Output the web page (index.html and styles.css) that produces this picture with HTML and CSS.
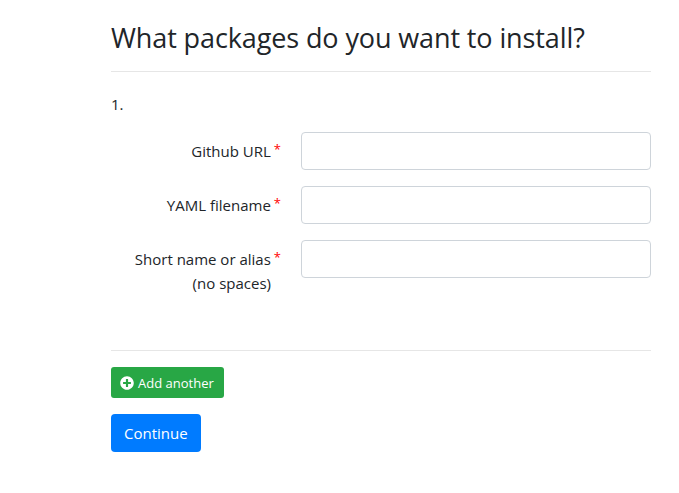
FILE: index.html

```html
<!DOCTYPE html>
<html lang="en">
<head>
  <meta charset="UTF-8" />
  <title>Packages</title>
  <link rel="stylesheet" href="styles.css">
</head>
<body>

<div class="contenedor">
  <h1>What packages do you want to install?</h1>
  <hr />

  <div class="paquete">
    <div class="numero">1.</div>

    <div class="fila">
      <label class="etiqueta">Github URL<span class="req">*</span></label>
      <input type="text" class="campo" />
    </div>
    <div class="fila">
      <label class="etiqueta">YAML filename<span class="req">*</span></label>
      <input type="text" class="campo" />
    </div>
    <div class="fila">
      <label class="etiqueta">Short name or alias<span class="req">*</span><br />(no spaces)</label>
      <input type="text" class="campo" />
    </div>
  </div>

  <hr />

  <button class="boton-add">
    <svg class="icono" viewBox="0 0 512 512" width="14" height="14"><path fill="currentColor" d="M256 8C119 8 8 119 8 256s111 248 248 248 248-111 248-248S393 8 256 8zm144 276c0 6.600-5.400 12-12 12h-92v92c0 6.600-5.400 12-12 12h-56c-6.600 0-12-5.400-12-12v-92h-92c-6.600 0-12-5.400-12-12v-56c0-6.600 5.400-12 12-12h92v-92c0-6.600 5.400-12 12-12h56c6.600 0 12 5.400 12 12v92h92c6.600 0 12 5.400 12 12v56z"/></svg>
    Add another
  </button>
  <button class="boton-continuar">Continue</button>
</div>

</body>
</html>
```

FILE: styles.css

```css
* { box-sizing: border-box; }
body { font-family: "Open Sans", "Noto Sans", sans-serif; font-size: 15px; color: #212529; margin: 0; background: #fff; }
.contenedor { width: 540px; margin-left: 111px; padding-top: 19px; }
h1 { font-size: 27px; font-weight: 400; line-height: 38px; margin: 0 0 14px; letter-spacing: -0.11px; }
hr { border: 0; border-top: 1px solid #e6e6e6; margin: 0; }
.paquete { padding-top: 22px; height: 278px; }
.numero { line-height: 21px; margin-bottom: 17px; }
.fila { display: flex; gap: 20px; margin-bottom: 16px; }
.etiqueta { width: 170px; text-align: right; line-height: 24px; padding: 7px 10px 0 0; }
.req { color: #f00; font-size: 13px; line-height: 0; margin: 0 -10px 0 3px; position: relative; top: -3px; }
.campo { flex: 1; height: 38px; border: 1px solid #ced4da; border-radius: 4px; background: #fff; }
.boton-add { display: flex; align-items: center; gap: 4px; height: 31px; margin-top: 16px; padding: 0 9px; width: 113px; background: #28a745; color: #fff; border: 0; border-radius: 3px; font: inherit; font-size: 13px; }
.boton-continuar { display: block; height: 38px; margin-top: 16px; padding: 0 13px; background: #007bff; color: #fff; border: 0; border-radius: 4px; font: inherit; font-size: 15px; }
```
